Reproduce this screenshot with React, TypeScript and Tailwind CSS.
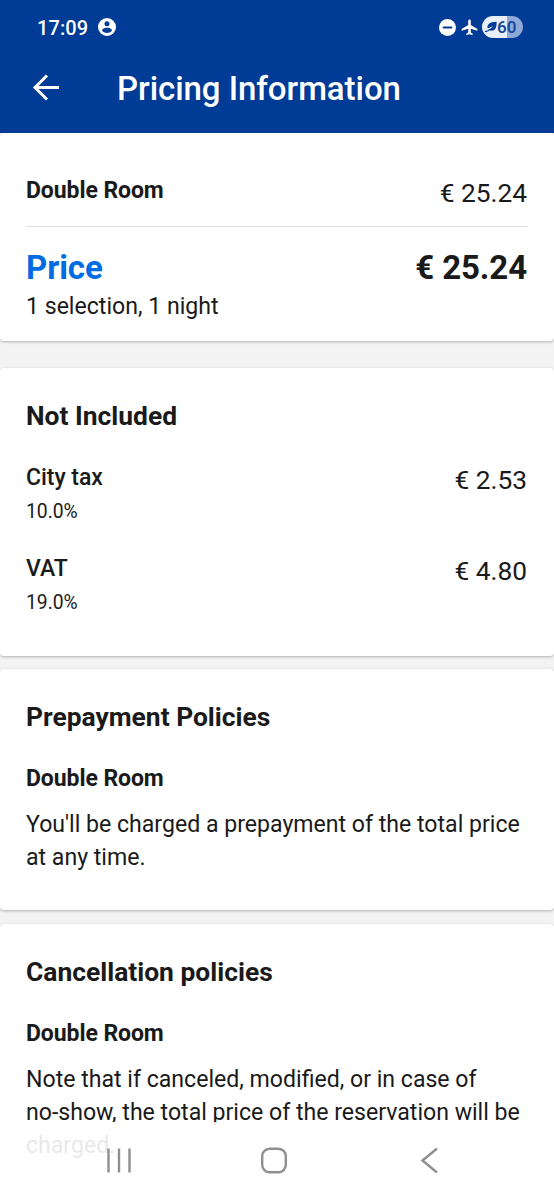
import type { ReactNode } from "react";

const TAXES = [
  { name: "City tax", rate: "10.0%", amount: "€ 2.53" },
  { name: "VAT", rate: "19.0%", amount: "€ 4.80" },
] as const;

function StatusBar() {
  return (
    <div className="flex h-[54px] items-center justify-between pl-[37px] pr-[31px]">
      <div className="flex items-center gap-[10px]">
        <span className="pt-px text-[20px] leading-[24px] font-medium tracking-[0.1px]">17:09</span>
        <svg className="size-[18px]" viewBox="0 0 18 18">
          <circle cx="9" cy="9" r="9" fill="currentColor" />
          <circle cx="9" cy="5.7" r="2.5" fill="#003b95" />
          <path d="M3.9 12.2C5 10.3 7 9.7 9 9.7s4 .6 5.1 2.5C13.1 14 11.2 15 9 15s-4.1-1-5.1-2.8Z" fill="#003b95" />
        </svg>
      </div>
      <div className="flex items-center">
        <svg className="size-[17px]" viewBox="0 0 17 17">
          <circle cx="8.5" cy="8.5" r="8.5" fill="currentColor" />
          <path d="M4.5 8.5h8" stroke="#003b95" strokeWidth="1.8" strokeLinecap="round" />
        </svg>
        <svg className="ml-[5px] h-[17px] w-[17px]" viewBox="0 0 17 17" fill="currentColor">
          <path d="M8.5.5c.8 0 1.3.7 1.3 1.6v4l6.6 3.9v1.7l-6.6-2v3.7l1.9 1.4V16l-3.2-.8-3.2.8v-1.2l1.9-1.4V9.7l-6.6 2V10l6.6-3.9v-4C7.2 1.2 7.7.5 8.5.5Z" />
        </svg>
        {/* Battery, 60% filled */}
        <div className="ml-[4px] flex h-[22px] w-[41px] items-center rounded-full bg-linear-to-r from-[#e8eff9] from-60% to-[#8ea8d7] to-60% pl-[3px] text-[#1a4a9c]">
          <svg className="size-[12px]" viewBox="0 0 12 12">
            <path d="M11.6.8c.2 5-1 9-4.9 9-1.2 0-2-.2-2.7-.7L8.2 4.9 2.6 7.6C1.6 3.6 4.6.8 11.6.8Z" fill="#003b95" />
            <path d="M.5 10.4c1.5.2 2.7-.4 3.9-1.7" stroke="#003b95" strokeWidth="1.2" fill="none" strokeLinecap="round" />
          </svg>
          <span className="text-[17px] leading-[22px] font-semibold">60</span>
        </div>
      </div>
    </div>
  );
}

function Card({ children, className }: { children: ReactNode; className: string }) {
  return (
    <section
      className={`shrink-0 rounded-[4px] bg-white px-[26px] shadow-[0_1px_3px_rgba(0,0,0,0.28)] ${className}`}
    >
      {children}
    </section>
  );
}

function Policy({ title, text }: { title: string; text: ReactNode }) {
  return (
    <>
      <h2 className="text-[26.4px] leading-[32px] font-bold">{title}</h2>
      <h3 className="mt-[32px] text-[23px] leading-[28px] font-bold tracking-[-0.08px]">Double Room</h3>
      <p className="mt-[15px] text-[23.1px] leading-[33px] whitespace-nowrap">{text}</p>
    </>
  );
}

export default function App() {
  return (
    <div className="relative flex h-[1200px] w-[554px] flex-col overflow-hidden bg-[#f3f3f3] font-['Roboto',sans-serif] text-[#1a1a1a]">
      <header className="h-[133px] shrink-0 bg-[#003b95] text-white">
        <StatusBar />
        <div className="flex h-[68px] items-center pl-[32px]">
          <svg className="h-[28px] w-[28px]" viewBox="0 0 28 28" fill="none" stroke="currentColor" strokeWidth="3">
            <path d="M27 13.5H3M15 1.5 3 13.5l12 12" />
          </svg>
          <h1 className="ml-[57px] pt-[2px] text-[33px] leading-[40px] font-medium tracking-[-0.05px]">
            Pricing Information
          </h1>
        </div>
      </header>

      <Card className="h-[208px] pt-[44px]">
        <div className="flex h-[50px] justify-between border-b-[1.5px] border-[#dfdfdf]">
          <h2 className="text-[23px] leading-[28px] font-bold tracking-[-0.08px]">Double Room</h2>
          <span className="pr-px text-[26.3px] leading-[32px]">€ 25.24</span>
        </div>
        <div className="mt-[21px] flex justify-between text-[33px] leading-[40px] font-bold tracking-[-0.1px]">
          <span className="text-[#006ce4]">Price</span>
          <span className="pr-px">€ 25.24</span>
        </div>
        <p className="mt-[5px] text-[23.1px] leading-[28px]">1 selection, 1 night</p>
      </Card>

      <Card className="mt-[27px] h-[288px] pt-[32px]">
        <h2 className="text-[26.4px] leading-[32px] font-bold">Not Included</h2>
        <div className="mt-[32px] flex flex-col gap-[31px]">
          {TAXES.map(({ name, rate, amount }) => (
            <div key={name} className="flex h-[60px] justify-between">
              <div>
                <h3 className="text-[23px] leading-[28px] font-medium tracking-[-0.05px]">{name}</h3>
                <p className="mt-[8px] text-[19.3px] leading-[24px]">{rate}</p>
              </div>
              <span className="pr-px text-[26.3px] leading-[32px]">{amount}</span>
            </div>
          ))}
        </div>
      </Card>

      <Card className="mt-[13px] h-[241px] pt-[32px]">
        <Policy
          title="Prepayment Policies"
          text={
            <>
              You'll be charged a prepayment of the total price
              <br />
              at any time.
            </>
          }
        />
      </Card>

      <Card className="mt-[14px] h-[300px] pt-[32px]">
        <Policy
          title="Cancellation policies"
          text={
            <>
              Note that if canceled, modified, or in case of
              <br />
              no-show, the total price of the reservation will be
              <br />
              charged.
            </>
          }
        />
      </Card>

      {/* System navigation, translucent over the page */}
      <nav className="absolute inset-x-0 bottom-0 flex h-[78px] items-start bg-white/90 pt-[24px] pl-[105px] text-[#8f8f8f]">
        <svg className="h-[30px] w-[28px]" viewBox="0 0 28 30" stroke="currentColor" strokeWidth="2.4">
          <path d="M3.5 2.5v24M14 2.5v24M24.5 2.5v24" />
        </svg>
        <svg className="ml-[126px] h-[30px] w-[30px]" viewBox="0 0 30 30" fill="none" stroke="currentColor" strokeWidth="2.4">
          <rect x="3.2" y="2.7" width="23.6" height="23.6" rx="7.5" />
        </svg>
        <svg className="ml-[131px] h-[30px] w-[20px]" viewBox="0 0 20 30" fill="none" stroke="currentColor" strokeWidth="2.4">
          <path d="M17 2.5 2.5 14.5 17 26.5" />
        </svg>
      </nav>
    </div>
  );
}
